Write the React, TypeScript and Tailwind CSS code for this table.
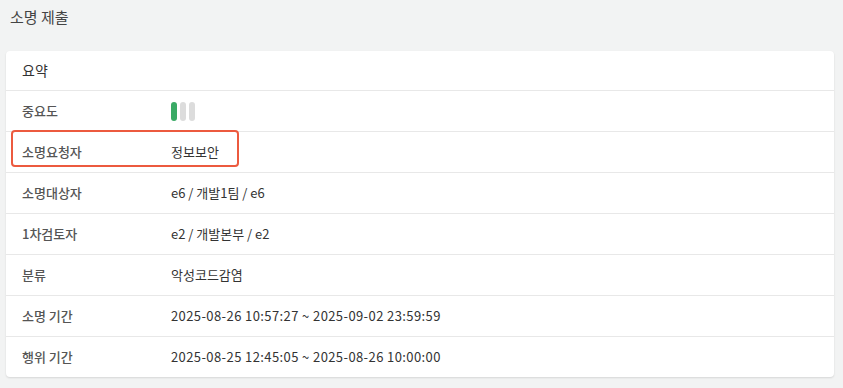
const rows: { label: string; value: string; highlight?: boolean; wide?: boolean }[] = [
  { label: '소명요청자', value: '정보보안', highlight: true },
  { label: '소명대상자', value: 'e6 / 개발1팀 / e6' },
  { label: '1차검토자', value: 'e2 / 개발본부 / e2' },
  { label: '분류', value: '악성코드감염' },
  { label: '소명 기간', value: '2025-08-26 10:57:27 ~ 2025-09-02 23:59:59', wide: true },
  { label: '행위 기간', value: '2025-08-25 12:45:05 ~ 2025-08-26 10:00:00', wide: true },
];

function Row({ label, children, highlight }: { label: string; children: React.ReactNode; highlight?: boolean }) {
  return (
    <div className="relative flex h-[41px] items-center border-t border-[#e8e8e8] px-4 text-[13px]">
      <span className="w-[149px] font-medium text-[#555]">{label}</span>
      <div className="text-[#333]">{children}</div>
      {highlight && (
        <div className="absolute left-[5px] top-[-2px] h-[37px] w-[228px] rounded-[4px] border-2 border-[#ec5a3f]" />
      )}
    </div>
  );
}

export default function App() {
  return (
    <div
      className="h-[388px] w-[843px] bg-[#f2f3f3] px-[6px] pt-[5px]"
      style={{ fontFamily: '"Noto Sans CJK KR", "Noto Sans", sans-serif' }}
    >
      <h2 className="mb-[22px] pl-1 text-[15px] leading-[24px] text-[#444]">소명 제출</h2>
      <div className="w-[828px] overflow-hidden rounded-[4px] bg-white shadow-[0_1px_2px_rgba(0,0,0,0.12)]">
        <div className="flex h-[39px] items-center px-4 text-[14px] text-[#333]">요약</div>
        <Row label="중요도">
          <div className="flex gap-[3px]">
            <span className="h-[19px] w-[6px] rounded-full bg-[#3aaa65]" />
            <span className="h-[19px] w-[6px] rounded-full bg-[#dcdcdc]" />
            <span className="h-[19px] w-[6px] rounded-full bg-[#dcdcdc]" />
          </div>
        </Row>
        {rows.map((r) => (
          <Row key={r.label} label={r.label} highlight={r.highlight}>
            <span className={r.wide ? 'tracking-[0.4px]' : ''}>{r.value}</span>
          </Row>
        ))}
      </div>
    </div>
  );
}
